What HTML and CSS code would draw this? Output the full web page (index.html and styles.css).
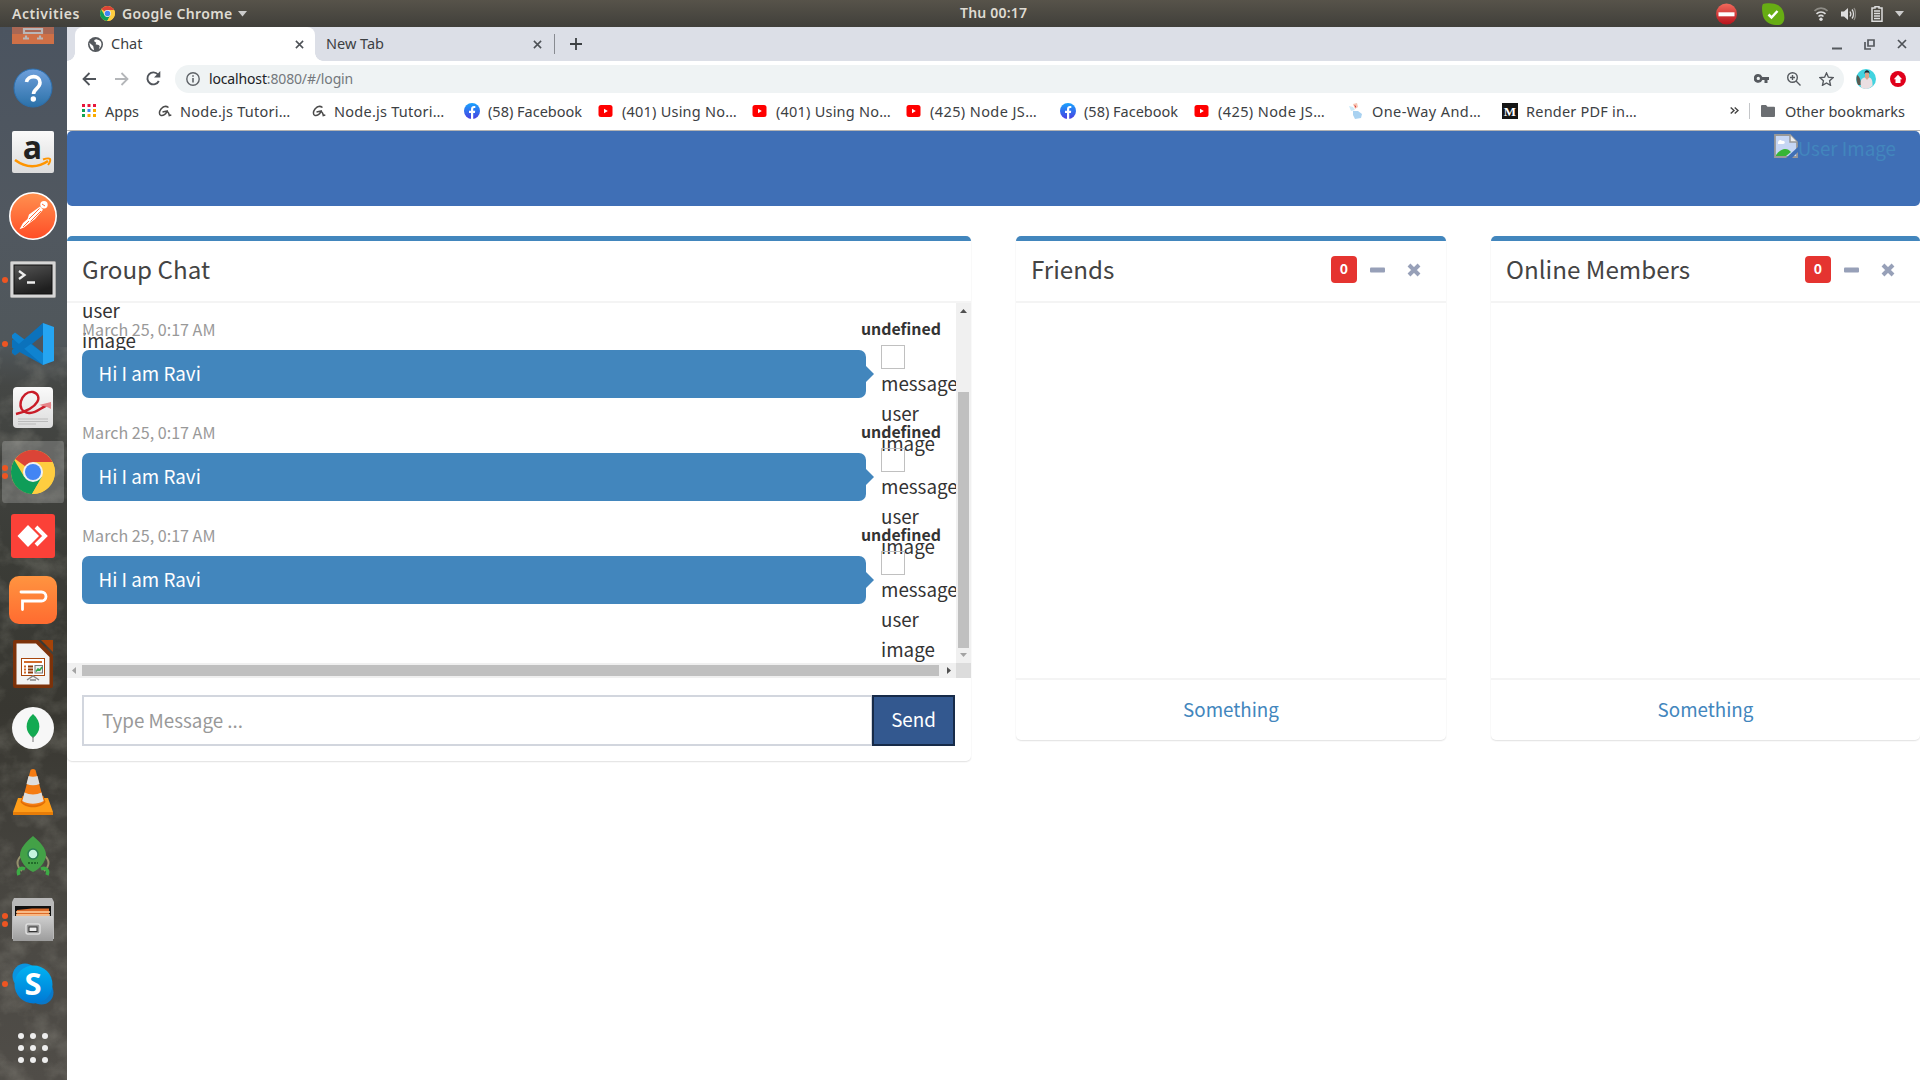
FILE: index.html
```html
<!DOCTYPE html>
<html lang="en">
<head>
<meta charset="utf-8">
<title>Chat</title>
<link rel="stylesheet" href="styles.css">
</head>
<body>
<svg class="defs" width="0" height="0" aria-hidden="true">
  <defs>
    <linearGradient id="gHelp" x2="0" y2="1"><stop offset="0" stop-color="#6fa0dc"/><stop offset="1" stop-color="#2b71a8"/></linearGradient>
    <linearGradient id="gPostman" x2="0" y2="1"><stop offset="0" stop-color="#ff9150"/><stop offset="1" stop-color="#ff4d26"/></linearGradient>
    <linearGradient id="gPaper" x2="0" y2="1"><stop offset="0" stop-color="#fafafa"/><stop offset="1" stop-color="#dcdcdc"/></linearGradient>
    <linearGradient id="gTerm" x2="0.4" y2="1"><stop offset="0" stop-color="#555"/><stop offset="1" stop-color="#1f1f1f"/></linearGradient>
    <linearGradient id="gWps" x2="0" y2="1"><stop offset="0" stop-color="#ff9440"/><stop offset="1" stop-color="#ff6b30"/></linearGradient>
    <linearGradient id="gMetal" x2="0" y2="1"><stop offset="0" stop-color="#cfcfcf"/><stop offset="1" stop-color="#9c9c9c"/></linearGradient>
    <linearGradient id="gSkype" x2="0" y2="1"><stop offset="0" stop-color="#00b3f2"/><stop offset="1" stop-color="#0078d4"/></linearGradient>
    <linearGradient id="gFb" x2="0" y2="1"><stop offset="0" stop-color="#18a3fe"/><stop offset="1" stop-color="#4a3ee0"/></linearGradient>
    <linearGradient id="gStop" x2="0" y2="1"><stop offset="0" stop-color="#f06a5c"/><stop offset="1" stop-color="#b8121c"/></linearGradient>
    <symbol id="chrome" viewBox="0 0 44 44">
      <circle cx="22" cy="22" r="22" fill="#ffcd40"/>
      <path d="M22 22 4.2 9A22 22 0 0 1 41.5 12H22z" fill="#db4437"/>
      <path d="M3.4 10.3A22 22 0 0 0 21 44l10-17-9-5-8.700 5z" fill="#0f9d58"/>
      <path d="M22 12h19.500A22 22 0 0 1 21 44l9.700-17z" fill="#ffcd40"/>
      <circle cx="22" cy="22" r="10" fill="#f1f1f1"/><circle cx="22" cy="22" r="8" fill="#4285f4"/>
    </symbol>
    <symbol id="youtube" viewBox="0 0 14 12"><rect width="14" height="12" rx="2.500" fill="#f00"/><path d="M5.500 3.800v4.400L9.300 6z" fill="#fff"/></symbol>
    <symbol id="facebook" viewBox="0 0 16 16"><circle cx="8" cy="8" r="8" fill="url(#gFb)"/><path d="M7 16V10H5V7.700h2V6.200C7 4 8.200 3 10 3h1.300v2.100h-1c-.8 0-1.100.4-1.100 1.200v1.400h2L10.900 10H9.200v6z" fill="#fff"/></symbol>
    <symbol id="gee" viewBox="0 0 14 12"><path d="M10.500 2.500C8 .5 5 1.500 3 4S.8 10 3 10.500s5-1.200 6-4.500L4.500 7M9 6c1.500 1.500 2.200 3 2.300 4.500l2-.5" fill="none" stroke="#4a4a4a" stroke-width="1.500"/></symbol>
    <symbol id="close" viewBox="0 0 10 10"><path d="M1 1l8 8M9 1L1 9" stroke="#4d5156" stroke-width="1.700"/></symbol>
    <symbol id="minus" viewBox="0 0 15 6"><rect width="15" height="5" y=".5" rx="1" fill="#97a0b8"/></symbol>
    <symbol id="times" viewBox="0 0 14 14"><path d="M2 2l10 10M12 2L2 12" stroke="#97a0b8" stroke-width="4"/></symbol>
  </defs>
</svg>

<header class="topbar">
  <span class="activities">Activities</span>
  <svg class="app-icon" width="15" height="15"><use href="#chrome"/></svg>
  <span class="app-name">Google Chrome</span>
  <svg class="caret" width="9" height="6" viewBox="0 0 9 6"><path d="M0 0h9L4.500 5.500z" fill="#ccc"/></svg>
  <span class="clock">Thu 00:17</span>
  <div class="tray">
    <svg width="21" height="22" viewBox="0 0 21 22"><circle cx="10.500" cy="11" r="10.500" fill="url(#gStop)"/><rect x="2.500" y="9.300" width="16" height="4" fill="#fff"/></svg>
    <svg width="23" height="22" viewBox="0 0 23 22"><path d="M1 1c2-1 5-1 9-.5C16 1 20 4 21.500 9c2 7 .5 12-4.500 13C10 22.500 3 20 1 13 0 8-.5 3 1 1z" fill="#67ad14"/><path d="M6.500 11.500l3 3L15.500 8" fill="none" stroke="#fff" stroke-width="2.500"/></svg>
    <svg width="14" height="14" viewBox="0 0 14 14"><g fill="none" stroke="#8e8c86" stroke-width="1.600"><path d="M.5 4c3.500-3.800 9.500-3.800 13 0"/><path d="M2.500 6.800c2.500-2.400 6.500-2.400 9 0M4.500 9.500c1.500-1.300 3.500-1.300 5 0" stroke="#ddd"/></g><circle cx="7" cy="12.200" r="1.700" fill="#ddd"/></svg>
    <svg width="15" height="14" viewBox="0 0 15 14"><path d="M0 4.500h3L7 1v12L3 9.500H0z" fill="#ddd"/><path d="M9 4.500c1 1.500 1 3.500 0 5M11 2.500c2 2.500 2 6.500 0 9" fill="none" stroke="#ddd" stroke-width="1.300"/><path d="M13 1c2 3 2 9 0 12" fill="none" stroke="#8e8c86" stroke-width="1.300"/></svg>
    <svg width="12" height="16" viewBox="0 0 12 16"><path d="M4 2V.8h4V2h3v13.200H1V2z" fill="none" stroke="#ddd" stroke-width="1.500"/><path d="M3 5h6M3 7.500h6M3 10h6M3 12.500h6" stroke="#ddd" stroke-width="1.400"/></svg>
    <svg width="9" height="6" viewBox="0 0 9 6"><path d="M0 0h9L4.500 5.500z" fill="#ccc"/></svg>
  </div>
</header>

<div class="desktop">
  <nav class="launcher">
    <svg class="rock" width="67" height="1053"><filter id="rockNoise" x="0" y="0" width="100%" height="100%"><feTurbulence type="fractalNoise" baseFrequency="0.035 0.04" numOctaves="5" seed="8"/><feColorMatrix values="0 0 0 0 .5  0 0 0 0 .49  0 0 0 0 .42  1.300 0 0 0 -.55"/></filter><rect y="320" width="67" height="733" filter="url(#rockNoise)" opacity=".4"/></svg>
    <div class="dock">
      <div class="dock-item"><svg width="42" height="42" viewBox="0 0 42 42"><rect width="42" height="41" fill="#cf7047"/><rect width="42" height="31" fill="#a96754"/><path d="M12 26h18v4H12zM14 36v-3.500M28 36v-3.500M11 35.500h6M25 35.500h6" fill="none" stroke="#b9b6b8" stroke-width="2.200"/></svg></div>
      <div class="dock-item"><svg width="42" height="42" viewBox="0 0 42 42"><circle cx="21" cy="21" r="19" fill="url(#gHelp)" stroke="#2c6fae" stroke-width="1"/><path d="M14.500 15c1-7 13.500-7.500 13.500.5 0 6-6.500 6-6.500 11.500" fill="none" stroke="#fff" stroke-width="3.600"/><circle cx="21.300" cy="32" r="2.700" fill="#fff"/></svg></div>
      <div class="dock-item"><svg width="42" height="42" viewBox="0 0 42 42"><rect width="42" height="42" rx="2" fill="url(#gPaper)"/><text x="20.500" y="28" class="amazon-a">a</text><path d="M3 29c11 8 23 8 33 1" fill="none" stroke="#ff9500" stroke-width="2.600"/><path d="M31 28.500c3-1 6-1.500 7-.5.500 1-.5 4-2 6" fill="none" stroke="#ff9500" stroke-width="2"/></svg></div>
      <div class="dock-item"><svg width="48" height="48" viewBox="0 0 48 48"><circle cx="24" cy="24" r="23.200" fill="url(#gPostman)" stroke="#fff" stroke-width="1.600"/><circle cx="35" cy="12.800" r="3.700" fill="#fff"/><path d="M31 14.500l3 3.200-8 9.300-4 3-7 5.500-4.500 1.700L14 31l4.500-4 1.500-4.500z" fill="#fff"/><path d="M30.500 16.500L20 27M32 19L21.500 29.500M20 29l-6 6M33 12l3 2" stroke="#ff6b39" stroke-width="1"/></svg></div>
      <div class="dock-item running"><svg width="46" height="38" viewBox="0 0 46 38"><rect x=".5" y=".5" width="45" height="36" rx="1" fill="#d6d6d6" stroke="#aaa"/><rect x="4" y="4" width="38" height="29" fill="url(#gTerm)" stroke="#111"/><path d="M9 10l5.500 4L9 18M17 21.500h8" fill="none" stroke="#eee" stroke-width="2.300"/></svg></div>
      <div class="dock-item running"><svg width="42" height="42" viewBox="0 0 42 42"><path d="M31 0L9.500 20.500 3 15.500 0 17.200v7.600l3 1.700L31 42z" fill="#0b72bc"/><path d="M3 9.500L0 12v3l31 27V30z" fill="#0f83d0"/><path d="M31 0L0 27v3l3 2.500L31 12z" fill="#0b72bc"/><path d="M31 0l11 4v34l-11 4z" fill="#25a5f2"/><path d="M31 12L20 21l11 9z" fill="#4e555c"/></svg></div>
      <div class="dock-item"><svg width="42" height="42" viewBox="0 0 42 42"><rect x="1" width="40" height="41" rx="4" fill="url(#gPaper)"/><path d="M4 27C28 21 31 8 21 5 9 3 2 25 17 26c8 1 14-8 22-9" fill="none" stroke="#c91c28" stroke-width="2.400"/><path d="M27 18l12-3v7c-5-3-8-3-12-4z" fill="#e58488"/><path d="M6 32h30M6 34.500h30M6 37h18" stroke="#bbb" stroke-width="1"/></svg></div>
      <div class="dock-item active twice"><svg width="44" height="44"><use href="#chrome"/></svg></div>
      <div class="dock-item"><svg width="44" height="44" viewBox="0 0 44 44"><rect width="44" height="44" rx="3" fill="#fb4138"/><path d="M17 11l11 11-11 11L6.500 22z" fill="#fff"/><path d="M25 13l9 9-9 9" fill="none" stroke="#fff" stroke-width="4"/></svg></div>
      <div class="dock-item"><svg width="48" height="48" viewBox="0 0 48 48"><rect width="48" height="48" rx="10" fill="url(#gWps)"/><path d="M12 16H32.500a4.500 4.500 0 0 1 0 9H13.500v8.500" fill="none" stroke="#fff" stroke-width="2.800" stroke-linecap="round"/></svg></div>
      <div class="dock-item"><svg width="40" height="48" viewBox="0 0 40 48"><path d="M2 0h23l15 15v31a2 2 0 0 1-2 2H2a2 2 0 0 1-2-2V2a2 2 0 0 1 2-2z" fill="#7c320a"/><path d="M28 0h12v12z" fill="#a54309"/><path d="M3.500 3.500H23L36.500 17v27.500h-33z" fill="#f3f3f3"/><rect x="8.500" y="18.500" width="23" height="17" fill="#fff" stroke="#a7460c"/><path d="M11 22h18" stroke="#d36a2a" stroke-width="2"/><path d="M11 26.500h2M11 29.500h2M11 32.500h2" stroke="#d36a2a" stroke-width="1.800"/><path d="M15 26.500h5M15 29.500h5M15 32.500h5" stroke="#8e3a0a" stroke-width="1.800"/><rect x="22" y="25.500" width="7.500" height="7.500" fill="#eee" stroke="#777"/><path d="M23 31.500l2-2.500 2 1 2-3" fill="none" stroke="#2fa84a" stroke-width="1.500"/><path d="M14 40l6-4 6 4M17 40h6" fill="none" stroke="#888" stroke-width="1.500"/></svg></div>
      <div class="dock-item"><svg width="42" height="42" viewBox="0 0 42 42"><circle cx="21" cy="21" r="21" fill="#f7f7f7"/><path d="M21 7c9 8 8 18 0 24-8-6-9-16 0-24z" fill="#13aa52"/><path d="M21 29v6" stroke="#777" stroke-width="1"/></svg></div>
      <div class="dock-item"><svg width="40" height="46" viewBox="0 0 40 46"><path d="M5 29h30l5 14H0z" fill="#ff9d18"/><path d="M0 43h40v3H0z" fill="#e77d08"/><path d="M7.500 33c5 7 20 7 25 0l-2-6h-21z" fill="#e06d05"/><path d="M17.500 1q2.500-2 5 0l8.500 32c-5 4.500-17 4.500-22 0z" fill="#f57c12"/><path d="M15.500 7L13.500 15c4 1.700 9 1.700 13 0L24.500 7c-3 1-6 1-9 0zM11.500 23.500L9.300 32c6 3.500 15 3.500 21.400 0l-2.200-8.500c-5 2.500-12 2.500-17 0z" fill="#dedede"/></svg></div>
      <div class="dock-item"><svg width="34" height="42" viewBox="0 0 34 42"><path d="M6 20c-6 5-6 11 0 16M28 20c6 5 6 11 0 16" fill="none" stroke="#94906d" stroke-width="2"/><path d="M17 1c7 6 13 12 13 19 0 6-6 14-13 17C10 34 4 26 4 20 4 13 10 7 17 1z" fill="#43a147"/><circle cx="17" cy="19" r="5" fill="#c4f4e0" stroke="#277e53" stroke-width="1.500"/><path d="M12 28h10" stroke="#216b2a" stroke-width="2" stroke-dasharray="2 1"/><path d="M9 34c-5-2-8 1-6 6M25 34c5-2 8 1 6 6" fill="none" stroke="#3dab45" stroke-width="3.500"/></svg></div>
      <div class="dock-item twice"><svg width="42" height="44" viewBox="0 0 42 44"><path d="M2 0h38l2 4v37H0V4z" fill="#b9b9b9"/><rect x="3" y="8" width="36" height="12" fill="#111"/><path d="M5 12l15-1.500 17 0V21H4z" fill="#dd6b28"/><path d="M4 14h34M4 17h34" stroke="#ffd4a4" stroke-width="1.300"/><path d="M1 18h40v25H1z" fill="url(#gMetal)"/><rect x="14" y="26" width="14" height="10" rx="2" fill="#999" stroke="#dedede" stroke-width="1.500"/><rect x="17" y="29" width="8" height="4.500" fill="#eee" stroke="#333"/></svg></div>
      <div class="dock-item running"><svg width="42" height="42" viewBox="0 0 42 42"><circle cx="13" cy="13" r="12.500" fill="#0a94df"/><circle cx="29.500" cy="29.500" r="12" fill="#0a78c9"/><circle cx="21.500" cy="21.500" r="19" fill="url(#gSkype)"/><text x="21" y="32" class="skype-s">S</text></svg></div>
      <div class="dock-item"><svg width="32" height="32" viewBox="0 0 32 32" fill="#eee"><circle cx="4" cy="4" r="3"/><circle cx="16" cy="4" r="3"/><circle cx="28" cy="4" r="3"/><circle cx="4" cy="16" r="3"/><circle cx="16" cy="16" r="3"/><circle cx="28" cy="16" r="3"/><circle cx="4" cy="28" r="3"/><circle cx="16" cy="28" r="3"/><circle cx="28" cy="28" r="3"/></svg></div>
    </div>
  </nav>

  <main class="browser">
    <div class="tabs">
      <div class="tab current">
        <svg width="15" height="15" viewBox="0 0 16 16"><circle cx="8" cy="8" r="8" fill="#54585d"/><path d="M1.500 6l4 3.500 1 4.500c-3-1-5-4-5-8zM9 2.500C6 3 6 5 8 5.500s-1 2 1 2.500 3 .5 3.500 2l-1 3c4-3 3.500-8 .5-9.500z" fill="#fff"/></svg>
        <span class="tab-title">Chat</span>
        <svg width="9" height="9"><use href="#close"/></svg>
      </div>
      <div class="tab"><span class="tab-title">New Tab</span><svg width="9" height="9"><use href="#close"/></svg></div>
      <div class="new-tab"><svg width="12" height="12" viewBox="0 0 12 12"><path d="M6 0v12M0 6h12" stroke="#3c4043" stroke-width="1.800"/></svg></div>
      <div class="window-buttons">
        <svg width="10" height="12" viewBox="0 0 10 12"><path d="M0 10.500h10" stroke="#55595e" stroke-width="2"/></svg>
        <svg width="11" height="11" viewBox="0 0 11 11"><path d="M4 1h6v6H4zM1 3v7h6" fill="none" stroke="#55595e" stroke-width="1.700"/></svg>
        <svg width="10" height="10"><use href="#close"/></svg>
      </div>
    </div>

    <div class="toolbar">
      <svg width="15" height="14" viewBox="0 0 15 14"><path d="M14 7H1.500M7.500 1l-6 6 6 6" fill="none" stroke="#50545a" stroke-width="1.800"/></svg>
      <svg width="15" height="14" viewBox="0 0 15 14"><path d="M1 7h12.500M7.500 1l6 6-6 6" fill="none" stroke="#b4b6b9" stroke-width="1.800"/></svg>
      <svg width="15" height="15" viewBox="0 0 15 15"><path d="M12.800 10A6 6 0 1 1 12 3.500" fill="none" stroke="#50545a" stroke-width="1.900"/><path d="M14.300 0v6.500H8z" fill="#50545a"/></svg>
      <div class="omnibox">
        <svg width="14" height="14" viewBox="0 0 14 14"><circle cx="7" cy="7" r="6.200" fill="none" stroke="#5f6368" stroke-width="1.400"/><path d="M7 6v4.500M7 3.200v1.600" stroke="#5f6368" stroke-width="1.600"/></svg>
        <span class="url"><b>localhost</b>:8080/#/login</span>
        <svg width="15" height="9" viewBox="0 0 15 9"><path d="M4.300 0a4.400 4.400 0 0 1 4 2.900H15v3h-1.500V9h-3V5.900H8.300A4.400 4.400 0 1 1 4.300 0zm0 2.800a1.600 1.600 0 1 0 0 3.300 1.600 1.600 0 0 0 0-3.300z" fill="#55595e"/></svg>
        <svg width="14" height="14" viewBox="0 0 14 14"><g fill="none" stroke="#55595e" stroke-width="1.400"><circle cx="5.500" cy="5.500" r="4.800"/><path d="M9 9l4.500 4.500M3 5.500h5M5.500 3v5"/></g></svg>
        <svg width="15" height="14" viewBox="0 0 15 14"><path d="M7.500 1l1.900 4.200 4.600.5-3.400 3.100.9 4.500-4-2.300-4 2.300.9-4.500L1 5.700l4.600-.5z" fill="none" stroke="#55595e" stroke-width="1.400"/></svg>
      </div>
      <svg width="20" height="20" viewBox="0 0 20 20"><circle cx="10" cy="10" r="10" fill="#42d3df"/><path d="M2 16C.5 13 0 9 1 6c2 1 4 4 4 10z" fill="#5a5a50"/><path d="M5 18.500c-1-7 0-9 3.500-10h5c3 1 3 5 3 8-3 3.500-7 4.500-11.500 2z" fill="#eadfe2"/><path d="M9 8.500l2 2.500 2-2.500V3.500H9z" fill="#dba68c"/><path d="M8.500 5c-.5-5 5.500-5 5 0l-1-1.500h-3z" fill="#20242b"/></svg>
      <svg width="16" height="16" viewBox="0 0 16 16"><circle cx="8" cy="8" r="8" fill="#e0001b"/><path d="M8 3.700l4.200 4.500H10.500V12h-5V8.200H3.800z" fill="#fff"/></svg>
    </div>

    <div class="bookmarks">
      <div class="bookmark apps"><i><svg width="14" height="13" viewBox="0 0 14 13"><path d="M0 0h3v3H0zM5.500 0h3v3h-3zM11 0h3v3h-3z" fill="#e8173c"/><path d="M0 5h3v3H0zM0 10h3v3H0z" fill="#10a352"/><path d="M5.500 5h3v3h-3z" fill="#4285f4"/><path d="M11 5h3v3h-3zM5.500 10h3v3h-3zM11 10h3v3h-3z" fill="#f9ab00"/></svg></i>Apps</div>
      <div class="bookmark w154 node"><i><svg width="14" height="12"><use href="#gee"/></svg></i>Node.js Tutori…</div>
      <div class="bookmark w152 node"><i><svg width="14" height="12"><use href="#gee"/></svg></i>Node.js Tutori…</div>
      <div class="bookmark w134"><i><svg width="16" height="16"><use href="#facebook"/></svg></i>(58) Facebook</div>
      <div class="bookmark w154 wide"><i><svg width="15" height="12"><use href="#youtube"/></svg></i>(401) Using No…</div>
      <div class="bookmark w154 wide"><i><svg width="15" height="12"><use href="#youtube"/></svg></i>(401) Using No…</div>
      <div class="bookmark w154 wider"><i><svg width="15" height="12"><use href="#youtube"/></svg></i>(425) Node JS…</div>
      <div class="bookmark w134"><i><svg width="16" height="16"><use href="#facebook"/></svg></i>(58) Facebook</div>
      <div class="bookmark w154 wider"><i><svg width="15" height="12"><use href="#youtube"/></svg></i>(425) Node JS…</div>
      <div class="bookmark w154 wider"><i><svg width="15" height="16" viewBox="0 0 15 16"><path d="M1 3l4 1 2 3-4 1z" fill="#cdeaf8"/><path d="M5 1l4-1 1 4-3 2z" fill="#f6c6b4"/><path d="M6 2l2 1v2z" fill="#d33"/><path d="M5 8h5l4 3-1 4-6 1-2-4z" fill="#a9d2f1"/></svg></i>One-Way And…</div>
      <div class="bookmark wide"><i><svg width="16" height="16" viewBox="0 0 16 16"><rect width="16" height="16" fill="#151515"/><text x="8" y="12.500" class="medium-m">M</text></svg></i>Render PDF in…</div>
      <div class="others">
        <svg width="9" height="7" viewBox="0 0 9 7"><path d="M.7.500L4 3.500.7 6.500M4.700.500L8 3.500 4.700 6.500" fill="none" stroke="#444" stroke-width="1.400"/></svg>
        <span class="divider"></span>
        <svg width="14" height="12" viewBox="0 0 14 12"><path d="M0 1a1 1 0 0 1 1-1h4l1.500 1.700H13a1 1 0 0 1 1 1V11a1 1 0 0 1-1 1H1a1 1 0 0 1-1-1z" fill="#6b6e72"/></svg>
        <span>Other bookmarks</span>
      </div>
    </div>

    <div class="page">
      <div class="hero">
        <svg width="24" height="24" viewBox="0 0 24 24"><path d="M1 1h15l7 7v15H1z" fill="#c6d6f4" stroke="#999" stroke-width="1.800"/><path d="M4 9c0-3 3-4 4-2 3-1 4 3 1 3H4z" fill="#fff"/><path d="M2 22v-1c3-4 6-6 9-6s4 1 6 3l-5 4z" fill="#36b536"/><path d="M12 24L24 13v5l-6 6z" fill="#3f6fb6"/><path d="M16 1v7h7" fill="#eee" stroke="#999" stroke-width="1.500"/></svg>
        <span>User Image</span>
      </div>

      <div class="cards">
        <section class="card">
          <div class="card-head"><h3>Group Chat</h3></div>
          <div class="chat">
            <div class="messages">
              <div class="alt alt-left">user<br>image</div>
              <article class="message"><div class="meta"><time>March 25, 0:17 AM</time><b>undefined</b></div><div class="bubble">Hi I am Ravi</div><div class="alt"><i class="broken"></i>message<br>user<br>image</div></article>
              <article class="message"><div class="meta"><time>March 25, 0:17 AM</time><b>undefined</b></div><div class="bubble">Hi I am Ravi</div><div class="alt"><i class="broken"></i>message<br>user<br>image</div></article>
              <article class="message"><div class="meta"><time>March 25, 0:17 AM</time><b>undefined</b></div><div class="bubble">Hi I am Ravi</div><div class="alt"><i class="broken"></i>message<br>user<br>image</div></article>
            </div>
            <div class="vbar">
              <svg width="7" height="4" viewBox="0 0 7 4"><path d="M0 4h7L3.500 0z" fill="#505050"/></svg>
              <span class="vthumb"></span>
              <svg width="7" height="4" viewBox="0 0 7 4"><path d="M0 0h7L3.500 4z" fill="#a3a3a3"/></svg>
            </div>
            <div class="hbar">
              <svg width="4" height="7" viewBox="0 0 4 7"><path d="M4 0v7L0 3.500z" fill="#a3a3a3"/></svg>
              <span class="hthumb"></span>
              <svg width="4" height="7" viewBox="0 0 4 7"><path d="M0 0v7l4-3.500z" fill="#505050"/></svg>
            </div>
            <div class="corner"></div>
          </div>
          <div class="composer"><div class="field">Type Message ...</div><div class="send">Send</div></div>
        </section>

        <section class="card">
          <div class="card-head"><h3>Friends</h3><span class="badge">0</span><svg class="min" width="15" height="6"><use href="#minus"/></svg><svg class="rm" width="14" height="14"><use href="#times"/></svg></div>
          <div class="list"></div>
          <div class="card-foot">Something</div>
        </section>

        <section class="card">
          <div class="card-head"><h3>Online Members</h3><span class="badge">0</span><svg class="min" width="15" height="6"><use href="#minus"/></svg><svg class="rm" width="14" height="14"><use href="#times"/></svg></div>
          <div class="list"></div>
          <div class="card-foot">Something</div>
        </section>
      </div>
    </div>
  </main>
</div>
</body>
</html>
```
FILE: styles.css
```css
* { box-sizing: border-box; }
body {
  margin: 0;
  width: 1920px;
  height: 1080px;
  overflow: hidden;
  background: #fff;
  font-family: "Noto Sans", "Open Sans", sans-serif;
  font-size: 14.5px;
  color: #3c4043;
  white-space: nowrap;
}
svg { display: block; flex: none; }
.defs { position: absolute; }

/* Desktop bar */
.topbar {
  position: relative;
  height: 27px;
  display: flex;
  align-items: center;
  padding: 0 16px 0 12px;
  background: linear-gradient(#57534a, #403f3a);
  color: #dfdbd2;
  font-weight: 600;
  font-size: 14px;
}
.activities { width: 88px; letter-spacing: .55px; }
.app-icon { margin-right: 7px; }
.app-name { width: 111px; letter-spacing: .35px; }
.caret { margin-left: 5px; }
.clock { position: absolute; left: 960px; width: 70px; top: 3px; letter-spacing: .2px; }
.tray { margin-left: auto; display: flex; align-items: center; }
.tray svg:nth-child(2) { margin-left: 25px; }
.tray svg:nth-child(3) { margin-left: 29px; }
.tray svg:nth-child(4) { margin-left: 13px; }
.tray svg:nth-child(5) { margin-left: 15px; }
.tray svg:nth-child(6) { margin-left: 12px; }

.desktop { display: flex; height: 1053px; }

/* Launcher */
.launcher {
  position: relative;
  width: 67px;
  overflow: hidden;
  background: linear-gradient(#4b5460, #515860 18%, #50575b 30%, #454745 34%, #3b3c37 50%, #383731 65%, #4a4843 85%, #504d48);
}
.rock { position: absolute; left: 0; top: 0; }
.dock { position: relative; margin-top: -35px; }
.dock-item { position: relative; height: 64px; display: flex; align-items: center; justify-content: center; padding-right: 1px; }
.dock-item.active { background: rgba(255, 255, 255, .2); background-clip: content-box; padding: 1px 3px 1px 2px; border-radius: 5px; }
.dock-item.running::before,
.dock-item.twice::before,
.dock-item.twice::after {
  content: "";
  position: absolute;
  left: 2px;
  top: 29px;
  width: 6px;
  height: 6px;
  border-radius: 50%;
  background: #ee5522;
}
.dock-item.twice::before { top: 25px; }
.dock-item.twice::after { top: 33px; }
.amazon-a { font: bold 32px "Open Sans", sans-serif; fill: #222; text-anchor: middle; }
.skype-s { font: bold 31px "Open Sans", sans-serif; fill: #fff; text-anchor: middle; }
.medium-m { font: bold 13px "Liberation Serif", serif; fill: #fff; text-anchor: middle; }

/* Browser chrome */
.browser { width: 1853px; background: #fff; }
.tabs { height: 34px; display: flex; align-items: center; background: #dcdfe7; padding-left: 8px; }
.tab { width: 240px; height: 34px; display: flex; align-items: center; padding: 0 12px; }
.tab.current { position: relative; background: #fff; border-radius: 8px 8px 0 0; padding: 0 11px 0 13px; }
.tab.current::before,
.tab.current::after {
  content: "";
  position: absolute;
  bottom: 0;
  width: 8px;
  height: 8px;
}
.tab.current::before { right: 100%; background: radial-gradient(circle at 0 0, transparent 7.500px, #fff 8px); }
.tab.current::after { left: 100%; background: radial-gradient(circle at 100% 0, transparent 7.500px, #fff 8px); }
.tab.current svg:first-child { margin-right: 8px; }
.tab-title { flex: 1; line-height: 20px; padding-bottom: 2px; }
.tab:nth-child(2) { width: 239px; padding: 0 12px 0 11px; }
.new-tab { border-left: 1px solid #888b91; height: 20px; display: flex; align-items: center; padding-left: 15px; }
.window-buttons { margin-left: auto; padding-right: 13px; display: flex; align-items: center; gap: 22px; }
.toolbar { height: 35px; display: flex; align-items: center; padding: 0 14px 0 15px; }
.toolbar > svg:nth-child(2), .toolbar > svg:nth-child(3) { margin-left: 17px; }
.omnibox { width: 1669px; height: 28px; border-radius: 14px; background: #eff3f4; margin-left: 14px; margin-right: 12px; display: flex; align-items: center; padding: 0 10px 0 11px; }
.url { flex: 1; padding-left: 9px; padding-bottom: 1px; color: #74787d; font-size: 14px; letter-spacing: -.15px; }
.url b { font-weight: 400; color: #202124; }
.omnibox svg + svg { margin-left: 18px; }
.toolbar > svg:last-child { margin-left: 14px; }
.bookmarks { height: 35px; display: flex; align-items: center; padding: 0 15px 5px; border-bottom: 1px solid #b3b3b3; }
.bookmark { width: 153px; display: flex; align-items: center; flex: none; }
.bookmark i { width: 24px; flex: none; }
.bookmark.node i { width: 22px; }
.bookmark.node { letter-spacing: .25px; }
.bookmark.wide { letter-spacing: .22px; }
.bookmark.wider { letter-spacing: .4px; }
.bookmark.apps { width: 76px; }
.bookmark.apps i { width: 23px; }
.bookmark.w154 { width: 154px; }
.bookmark.w152 { width: 152px; }
.bookmark.w134 { width: 134px; }
.others { margin-left: auto; display: flex; align-items: center; }
.divider { width: 1px; height: 16px; background: #c4c6c9; margin: 0 11px 0 10px; }
.others span:last-child { margin-left: 10px; width: 120px; }

/* Chat page */
.page { font-family: "Noto Sans CJK SC", "Noto Sans", sans-serif; font-size: 18.8px; line-height: 30px; color: #333; }
.hero { height: 75px; border-radius: 5px; background: #3f6fb6; color: #4286bd; display: flex; justify-content: flex-end; align-items: flex-start; padding: 3px 24px 0 0; }
.hero span { margin-top: -1px; }
.cards { display: grid; grid-template-columns: 904px 430px 429px; gap: 45px; margin-top: 30px; align-items: start; }
.card { border-top: 5px solid #4286bd; border-radius: 5px; box-shadow: 0 1px 1.500px rgba(0, 0, 0, .12); background: #fff; }
.card-head { height: 62px; border-bottom: 2px solid #f4f4f4; display: flex; align-items: center; padding: 0 19px 3px 15px; }
.card-head h3 { flex: 1; margin: -1px 0 0; font-size: 24.2px; font-weight: 400; color: #444; }
.badge { width: 26px; height: 27px; border-radius: 4px; background: #e53430; color: #fff; font-size: 14px; font-weight: 700; line-height: 25px; text-align: center; }
.min { margin: 0 22px 0 13px; }
.rm { margin-right: 6px; }
.list { height: 375px; }
.card-foot { height: 62px; border-top: 2px solid #f4f4f4; text-align: center; line-height: 58px; color: #4286bd; }

.chat { height: 375px; display: grid; grid-template: 360px 15px / 889px 15px; }
.messages { position: relative; overflow: hidden; padding: 15px 0 0 15px; }
.message { position: relative; height: 103px; width: 859px; }
.meta { display: flex; justify-content: space-between; font-size: 16.1px; line-height: 22px; height: 32px; color: #999; }
.meta b { color: #333; font-size: 15.900px; }
.bubble { position: relative; width: 784px; height: 48px; border-radius: 7px; background: #4286bd; color: #fff; padding-left: 16.500px; line-height: 45px; }
.bubble::after { content: ""; position: absolute; left: 100%; top: 16px; border: 8px solid transparent; border-left-color: #4286bd; border-right: 0; }
.alt { position: absolute; left: 799px; top: 26px; color: #333; }
.alt-left { left: 15px; top: -8px; }
.broken { display: block; width: 24px; height: 24px; margin: 1px 0 -1px; border: 1px solid #c0c0c0; }
.message .alt { padding-top: 1px; }
.message .broken { margin-top: 0; }
.vbar { background: #f0f0f0; display: flex; flex-direction: column; align-items: center; padding-top: 6px; }
.vthumb { width: 11px; height: 256px; margin: 79px 0 5px; background: #c0c0c0; }
.hbar { background: #f0f0f0; display: flex; align-items: center; padding-left: 5px; }
.hthumb { width: 857px; height: 11px; margin: 0 8px 0 6px; background: #c0c0c0; }
.corner { background: #dcdcdc; }
.composer { display: flex; padding: 15px 15px 0; height: 81px; margin-top: 2px; }
.field { width: 790px; height: 51px; border: 2px solid #d2d6de; border-right-width: 1px; padding-left: 18px; line-height: 45px; color: #999; }
.send { width: 83px; height: 51px; border: 2px solid #172b49; background: #33588f; color: #fff; text-align: center; line-height: 43px; }
```
